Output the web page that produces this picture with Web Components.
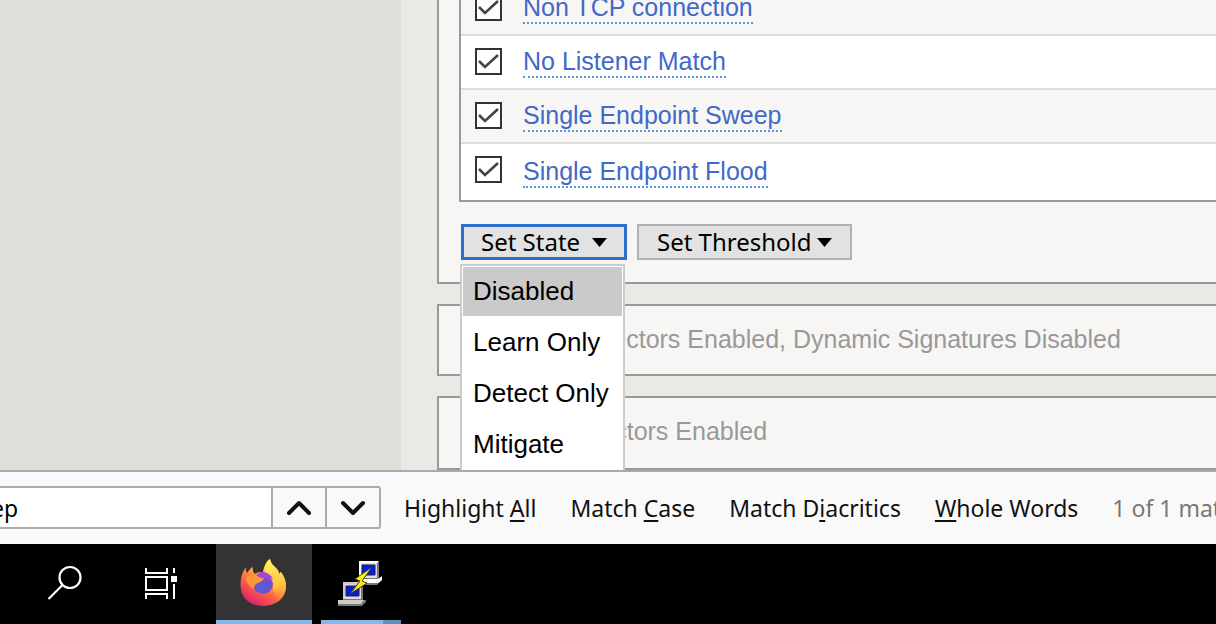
<!DOCTYPE html>
<html lang="en">
<head>
<meta charset="utf-8">
<title>DoS Protection Vectors</title>
<style>
html,body{margin:0;height:100%;overflow:hidden}
body{font-family:"Liberation Sans",Arial,sans-serif;font-size:25px;color:#111}
</style>
</head>
<body>
<desktop-shell>
  <config-page>
    <vector-panel slot="main">
      <vector-table></vector-table>
      <action-bar></action-bar>
    </vector-panel>
    <summary-panel style="--lead:158px">Vectors Enabled, Dynamic Signatures Disabled</summary-panel>
    <summary-panel style="--lead:146px">Vectors Enabled</summary-panel>
  </config-page>
  <find-bar></find-bar>
  <task-bar></task-bar>
</desktop-shell>
<script>
const define = (name, html) => customElements.define(name, class extends HTMLElement {
  constructor() {
    super();
    this.attachShadow({mode: 'open'}).innerHTML = html;
  }
});

customElements.define('vector-table', class extends HTMLElement {
  constructor() {
    super();
    const names = ['Non TCP connection', 'No Listener Match', 'Single Endpoint Sweep', 'Single Endpoint Flood'];
    this.attachShadow({mode: 'open'}).innerHTML = `
<style>
:host{display:block;border:solid #999;border-width:0 0 2px 2px;background:#fff}
table{border-collapse:separate;border-spacing:0;width:100%}
td{height:52px;padding:0;border-bottom:2px solid #dcdddb;vertical-align:middle}
td:first-child{width:62px;vertical-align:top}
tr:nth-child(odd) td{background:#f7f6f4}
tr:last-child td{height:56px;border-bottom:0}
input{appearance:none;display:block;width:27px;height:27px;margin:12px 0 0 14px;border:2px solid #333;
 background:#fff url("data:image/svg+xml,%3Csvg xmlns='http://www.w3.org/2000/svg' viewBox='0 0 23 23'%3E%3Cpath d='M2 11l6 6L21 5' fill='none' stroke='%23444' stroke-width='2.6'/%3E%3C/svg%3E")}
a{display:inline-block;line-height:30px;color:#4169c8;text-decoration:none;border-bottom:2px dotted #5b97d8}
</style>
<table><tbody>${names.map((n, i) => `<tr><td><input type="checkbox" id="v${i}" aria-labelledby="n${i}" checked></td><td><a id="n${i}" href="#">${n}</a></td></tr>`).join('')}</tbody></table>`;
  }
});

define('drop-button', `
<style>
:host{display:block}
button{display:flex;align-items:center;justify-content:space-between;gap:5px;box-sizing:border-box;min-width:166px;height:36px;padding:0 18px;
 border:2px solid #b1b1b1;border-radius:0;background:#e2e2e2;color:#000;font:24px/32px "Noto Sans",sans-serif;white-space:nowrap}
:host([active]) button{border:3px solid #2a70cb;padding:0 17px}
svg{display:block}
</style>
<button type="button"><slot></slot><svg width="15" height="9" viewBox="0 0 15 9"><path d="M0 0h15L7.5 9z"/></svg></button>`);

define('state-menu', `
<style>
:host{display:flex;flex-direction:column;gap:2px;box-sizing:border-box;width:165px;padding:1px;border:2px solid #ccc;background:#fff}
button{flex:none;height:49px;padding:0 0 2px 10px;border:0;background:none;color:#000;
 font:26px/30px "Liberation Sans",Arial,sans-serif;text-align:left;white-space:nowrap}
button:first-of-type{background:#cacaca}
</style>
<button type="button">Disabled</button><button type="button">Learn Only</button><button type="button">Detect Only</button><button type="button">Mitigate</button>`);

define('action-bar', `
<style>
:host{display:flex;gap:10px;margin-top:22px;padding-left:2px}
.anchor{position:relative}
state-menu{position:absolute;top:100%;left:-1px;margin-top:4px;z-index:2}
</style>
<div class="anchor"><drop-button active>Set State</drop-button><state-menu></state-menu></div>
<drop-button>Set Threshold</drop-button>`);

define('vector-panel', `
<style>
:host{display:block;flex:none;padding:0 0 22px 20px;border:solid #999;border-width:0 0 2px 2px;background:#f7f6f4}
</style>
<slot></slot>`);

define('summary-panel', `
<style>
:host{display:block;flex:none;border:solid #999;border-width:2px 0 2px 2px;background:#f7f6f4;color:#999;
 line-height:66px;padding:0 0 2px var(--lead);white-space:nowrap}
:host(:last-child){padding-bottom:4px}
</style>
<slot></slot>`);

define('config-page', `
<style>
:host{display:flex;min-height:0;overflow:hidden;background:#eae9e5}
aside{flex:0 0 401px;background:#dfded9}
main{flex:1;min-width:0;display:flex;flex-direction:column;justify-content:flex-end;gap:20px;margin-left:36px}
</style>
<aside></aside>
<main><slot name="main"></slot><slot></slot></main>`);

define('find-bar', `
<style>
:host{display:flex;align-items:center;box-sizing:border-box;height:74px;border-top:2px solid #aaa;background:#f9f9fa;
 font:23px/32px "Noto Sans",sans-serif;overflow:hidden;white-space:nowrap}
.field{flex:none;display:flex;width:392px;height:43px;margin:0 23px 1px -11px;box-sizing:border-box;border:2px solid #ababab;border-radius:3px}
input{flex:1;min-width:0;padding:0;border:0;background:#fff;color:#000;font:inherit;outline:0}
.field button{width:54px;padding:0;border:0;border-left:2px solid #ababab;background:#f9f9fa;display:grid;place-items:center}
.options{display:flex;gap:34px}
.options button{padding:0;border:0;background:none;color:#111;font:inherit}
u{text-decoration-thickness:2px;text-underline-offset:3px;text-decoration-skip-ink:none}
output{color:#777}
path{fill:none;stroke:#111;stroke-width:4;stroke-linecap:round;stroke-linejoin:round}
</style>
<div class="field"><input type="text" aria-label="Find in page" value="ep">
<button type="button" aria-label="Previous"><svg width="26" height="16" viewBox="0 0 26 16"><path d="M3 13L13 3l10 10"/></svg></button>
<button type="button" aria-label="Next"><svg width="26" height="16" viewBox="0 0 26 16"><path d="M3 3l10 10L23 3"/></svg></button></div>
<div class="options">
<button type="button">Highlight <u>A</u>ll</button>
<button type="button">Match <u>C</u>ase</button>
<button type="button">Match D<u>i</u>acritics</button>
<button type="button"><u>W</u>hole Words</button>
<output>1 of 1 match</output>
</div>`);

define('task-bar', `
<style>
:host{display:flex;height:80px;padding-left:18px;background:#000}
button{flex:none;display:grid;place-items:center;width:96px;height:80px;padding:0 2px 2px 0;border:0;background:none}
svg{display:block}
.fox{margin-left:6px;background:linear-gradient(#333 76px,#83b9ea 76px)}
.putty{width:80px;margin-left:9px;background:linear-gradient(90deg,#83b9ea 62px,#5f8fbe 62px) bottom/100% 4px no-repeat}
</style>
<button type="button" aria-label="Search"><svg width="36" height="36" viewBox="0 0 36 36" fill="none" stroke="#fff" stroke-width="2.2"><circle cx="23" cy="12.500" r="10.500"/><path d="M15.500 20L1.500 34"/></svg></button>
<button type="button" aria-label="Task view"><svg width="34" height="34" viewBox="0 0 34 34" fill="none" stroke="#fff" stroke-width="2"><path d="M2 2v5h21V2M2 11h21v13H2zM2 33v-5h21v5M30 2v5M30 18v15"/><path fill="#fff" stroke="none" d="M27 10h6v6h-6z"/></svg></button>
<button class="fox" type="button" aria-label="Firefox"><svg width="46" height="48" viewBox="0 0 46 48">
<defs><linearGradient id="f" x1=".85" y1=".1" x2=".3" y2="1"><stop offset="0" stop-color="#fff04f"/><stop offset=".35" stop-color="#ffae35"/><stop offset=".65" stop-color="#ff6245"/><stop offset="1" stop-color="#dc1f70"/></linearGradient>
<linearGradient id="y" x1=".5" y1="0" x2=".6" y2="1"><stop offset="0" stop-color="#fff261"/><stop offset=".6" stop-color="#ffc340"/><stop offset="1" stop-color="#ff8a42" stop-opacity="0"/></linearGradient>
<radialGradient id="p" cx=".5" cy=".65" r=".6"><stop offset="0" stop-color="#4f62d6"/><stop offset=".6" stop-color="#6e50d0"/><stop offset="1" stop-color="#a445e0"/></radialGradient></defs>
<path fill="url(#f)" d="M6 8c-.5 3 0 4 1 6 1-1 3-5 6-6-.5 3 0 5 2 7 3-2 5-2 8-1 0-5 3-11 7-14 1 5 3 6 6 9 2 2 3 4 3 6l2-2c3 4 5 9 5 14 0 11-9 20-23 20S.5 38 .5 26C.5 18 3 12 6 8z"/>
<path fill="url(#y)" d="M30 0c1 5 3 6 6 9 2 2 3 4 3 6l2-2c3 4 5 9 5 15 0 7-4 13-9 16 0-6-2-10-4-13 1-4-1-9-5-13-6-7-3-15 2-18z"/>
<circle cx="23" cy="25" r="10" fill="url(#p)"/><path fill="#a445e0" d="M15 18c3-5 8-6 12-4 3 2 5 3 6 6-3-2-5-2-7-1z"/>
<path fill="#ff963a" d="M6 19c3-3 7-4 10-3 2 2 5 3 8 3-1 3-4 4-6 5-3 1-4 3-4 6-4-2-8-6-8-11z"/></svg></button>
<button class="putty" type="button" aria-label="PuTTY"><svg width="46" height="46" viewBox="0 0 46 46">
<path fill="#777" d="M22 2h20v17h3v1l-5 5H21v-5h3z"/><path fill="#ddd" d="M22 1h18v17H22z"/><path fill="#fff" d="M22 1h20l-2 2H24v14h-2zM24 19h17l4-3v4l-4 3H24z"/><path fill="#001cf0" stroke="#223" d="M25 5h13v10H25z"/>
<g transform="translate(-16 21)"><path fill="#777" d="M22 2h20v17h3v2l-4 4H17v-6h5z"/><path fill="#ddd" d="M22 1h18v17H22z"/><path fill="#ccc" d="M22 1h20l-2 2H24v14h-2zM17 19h26l-3 4H17z"/><path fill="#001cf0" stroke="#223" d="M25 5h13v10H25z"/></g>
<path fill="#ffed17" stroke="#443f00" d="M35 7L18 19l5 2-10 13 17-11-5-2z"/></svg></button>`);

define('desktop-shell', `
<style>
:host{display:grid;grid-template-rows:minmax(0,1fr) auto auto;grid-template-columns:minmax(0,1fr);height:100vh}
</style>
<slot></slot>`);
</script>
</body>
</html>
